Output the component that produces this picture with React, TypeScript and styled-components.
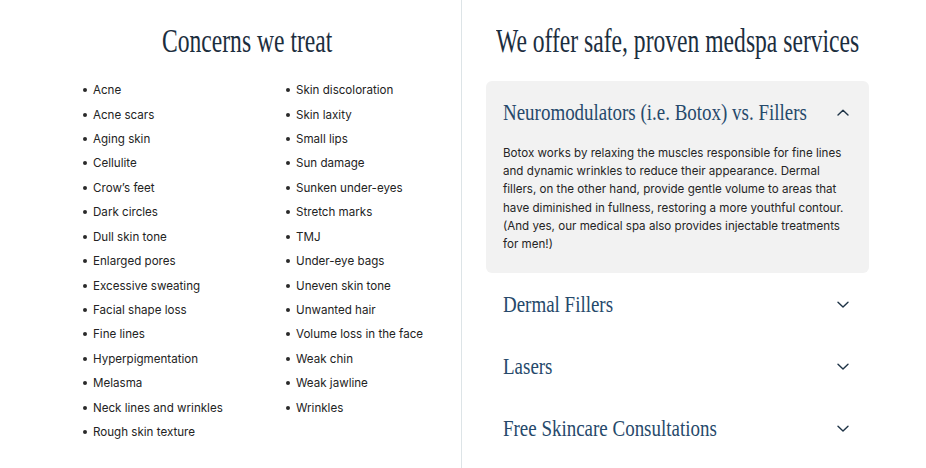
import React from 'react';
import styled, { createGlobalStyle } from 'styled-components';

const GlobalStyle = createGlobalStyle`
  html, body {
    margin: 0;
    padding: 0;
    background: #ffffff;
  }
  body {
    font-family: Inter, "Noto Sans", sans-serif;
    -webkit-font-smoothing: antialiased;
  }
`;

const concernsLeft = [
  'Acne',
  'Acne scars',
  'Aging skin',
  'Cellulite',
  'Crow’s feet',
  'Dark circles',
  'Dull skin tone',
  'Enlarged pores',
  'Excessive sweating',
  'Facial shape loss',
  'Fine lines',
  'Hyperpigmentation',
  'Melasma',
  'Neck lines and wrinkles',
  'Rough skin texture',
];

const concernsRight = [
  'Skin discoloration',
  'Skin laxity',
  'Small lips',
  'Sun damage',
  'Sunken under-eyes',
  'Stretch marks',
  'TMJ',
  'Under-eye bags',
  'Uneven skin tone',
  'Unwanted hair',
  'Volume loss in the face',
  'Weak chin',
  'Weak jawline',
  'Wrinkles',
];

interface Service {
  title: string;
  body?: string;
}

const services: Service[] = [
  {
    title: 'Neuromodulators (i.e. Botox) vs. Fillers',
    body:
      'Botox works by relaxing the muscles responsible for fine lines and dynamic wrinkles to reduce their appearance. Dermal fillers, on the other hand, provide gentle volume to areas that have diminished in fullness, restoring a more youthful contour. (And yes, our medical spa also provides injectable treatments for men!)',
  },
  { title: 'Dermal Fillers' },
  { title: 'Lasers' },
  { title: 'Free Skincare Consultations' },
];

const Page = styled.div`
  display: flex;
  width: 926px;
  height: 468px;
  overflow: hidden;
`;

const LeftPanel = styled.section`
  width: 462px;
  flex: none;
  border-right: 1px solid #dde4e7;
  display: flex;
  flex-direction: column;
  padding-top: 22px;
  box-sizing: border-box;
`;

const RightPanel = styled.section`
  width: 463px;
  min-width: 0;
  flex: none;
  padding: 22px 56px 0 34px;
  box-sizing: border-box;
`;

const Heading = styled.h2<{ $align?: 'center' | 'left' }>`
  margin: 0;
  font-family: "Liberation Serif", "Times New Roman", serif;
  font-weight: 400;
  font-size: 33px;
  line-height: 38px;
  color: #1c2e3e;
  white-space: nowrap;
  text-align: ${(p) => p.$align ?? 'left'};
  padding-left: ${(p) => (p.$align === 'center' ? '33px' : '0')};

  span {
    display: inline-block;
    transform: scaleX(0.715);
    transform-origin: ${(p) => (p.$align === 'center' ? 'center' : 'left')};
  }
`;

const ConcernGrid = styled.div`
  display: grid;
  grid-template-columns: 203px 180px;
  margin: 18px 0 0 81px;
`;

const ConcernList = styled.ul`
  list-style: none;
  margin: 0;
  padding: 0;
`;

const ConcernItem = styled.li`
  display: flex;
  align-items: center;
  height: 24.43px;
  font-size: 11.6px;
  color: #232323;
  white-space: nowrap;

  &::before {
    content: '';
    width: 4px;
    height: 4px;
    border-radius: 50%;
    background: #2a2a2a;
    margin: 0 6px 0 2px;
    flex: none;
  }
`;

const Accordion = styled.div`
  margin-top: 21px;
  margin-left: -10px;
  display: flex;
  flex-direction: column;
`;

const Panel = styled.div<{ $open?: boolean }>`
  background: ${(p) => (p.$open ? '#f2f2f2' : 'transparent')};
  border-radius: 6px;
  padding: ${(p) => (p.$open ? '18px 20px 20px 17px' : '18px 20px 18px 17px')};
`;

const PanelHeader = styled.div`
  display: flex;
  align-items: center;
  justify-content: space-between;
  height: 26px;
`;

const PanelTitle = styled.h3`
  margin: 0;
  min-width: 0;
  font-family: "Liberation Serif", "Times New Roman", serif;
  font-weight: 400;
  font-size: 24px;
  line-height: 26px;
  color: #26496b;
  white-space: nowrap;

  span {
    display: inline-block;
    transform: scaleX(0.79);
    transform-origin: left;
  }
`;

const PanelBody = styled.p`
  margin: 19px 0 0;
  font-size: 11.6px;
  line-height: 18.2px;
  color: #252525;
`;

const ChevronIcon = styled.svg`
  flex: none;
`;

const Chevron: React.FC<{ up?: boolean }> = ({ up }) => (
  <ChevronIcon width="12" height="7" viewBox="0 0 12 7" fill="none">
    <path
      d={up ? 'M1 6L6 1.2L11 6' : 'M1 1.2L6 6L11 1.2'}
      stroke="#1f3447"
      strokeWidth="1.4"
      strokeLinecap="round"
      strokeLinejoin="round"
    />
  </ChevronIcon>
);

const App: React.FC = () => {
  return (
    <>
      <GlobalStyle />
      <Page>
        <LeftPanel>
          <Heading $align="center">
            <span>Concerns we treat</span>
          </Heading>
          <ConcernGrid>
            <ConcernList>
              {concernsLeft.map((c) => (
                <ConcernItem key={c}>{c}</ConcernItem>
              ))}
            </ConcernList>
            <ConcernList>
              {concernsRight.map((c) => (
                <ConcernItem key={c}>{c}</ConcernItem>
              ))}
            </ConcernList>
          </ConcernGrid>
        </LeftPanel>
        <RightPanel>
          <Heading>
            <span>We offer safe, proven medspa services</span>
          </Heading>
          <Accordion>
            {services.map((s) => (
              <Panel key={s.title} $open={!!s.body}>
                <PanelHeader>
                  <PanelTitle>
                    <span>{s.title}</span>
                  </PanelTitle>
                  <Chevron up={!!s.body} />
                </PanelHeader>
                {s.body && <PanelBody>{s.body}</PanelBody>}
              </Panel>
            ))}
          </Accordion>
        </RightPanel>
      </Page>
    </>
  );
};

export default App;
